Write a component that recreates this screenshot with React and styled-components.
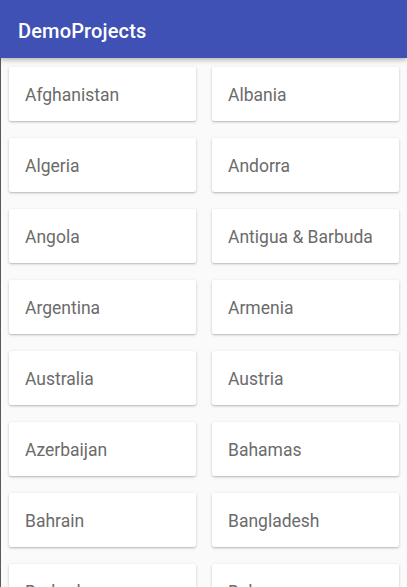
import React from "react";
import styled, { createGlobalStyle } from "styled-components";

const Global = createGlobalStyle`
  html, body { margin: 0; padding: 0; background: #fafafa; }
  body { font-family: Roboto, "Noto Sans", sans-serif; overflow: hidden; }
  #root { width: 407px; height: 587px; }
`;

const Screen = styled.div`
  width: 407px;
  height: 587px;
  display: flex;
  flex-direction: column;
  background: #fafafa;
  overflow: hidden;
  position: relative;
`;

const AppBar = styled.header`
  height: 58px;
  flex: none;
  background: #3f51b5;
  display: flex;
  align-items: center;
  padding-left: 18px;
  box-sizing: border-box;
  padding-top: 3px;
  box-shadow: 0 2px 5px rgba(0, 0, 0, 0.28);
  position: relative;
  z-index: 2;
`;

const Title = styled.h1`
  margin: 0;
  color: #ffffff;
  font-size: 20px;
  font-weight: 500;
  letter-spacing: 0.15px;
`;

const Content = styled.main`
  flex: 1;
  border-left: 1px solid #5a5a5a;
  padding: 9px 8px 0 8px;
  display: grid;
  grid-template-columns: 187px 187px;
  column-gap: 16px;
  row-gap: 17px;
  align-content: start;
`;

const Card = styled.div`
  height: 54px;
  background: #ffffff;
  border-radius: 2px;
  box-shadow: 0 1px 3px rgba(0, 0, 0, 0.22), 0 1px 1px rgba(0, 0, 0, 0.08);
  display: flex;
  align-items: center;
  padding: 2px 0 0 16px;
  box-sizing: border-box;
`;

const Label = styled.span`
  font-size: 17.5px;
  color: #6b6b6b;
  white-space: nowrap;
`;

const countries = [
  "Afghanistan", "Albania",
  "Algeria", "Andorra",
  "Angola", "Antigua & Barbuda",
  "Argentina", "Armenia",
  "Australia", "Austria",
  "Azerbaijan", "Bahamas",
  "Bahrain", "Bangladesh",
  "Barbados", "Belarus",
];

export default function App() {
  return (
    <>
      <Global />
      <Screen>
        <AppBar>
          <Title>DemoProjects</Title>
        </AppBar>
        <Content>
          {countries.map((c) => (
            <Card key={c}>
              <Label>{c}</Label>
            </Card>
          ))}
        </Content>
      </Screen>
    </>
  );
}
